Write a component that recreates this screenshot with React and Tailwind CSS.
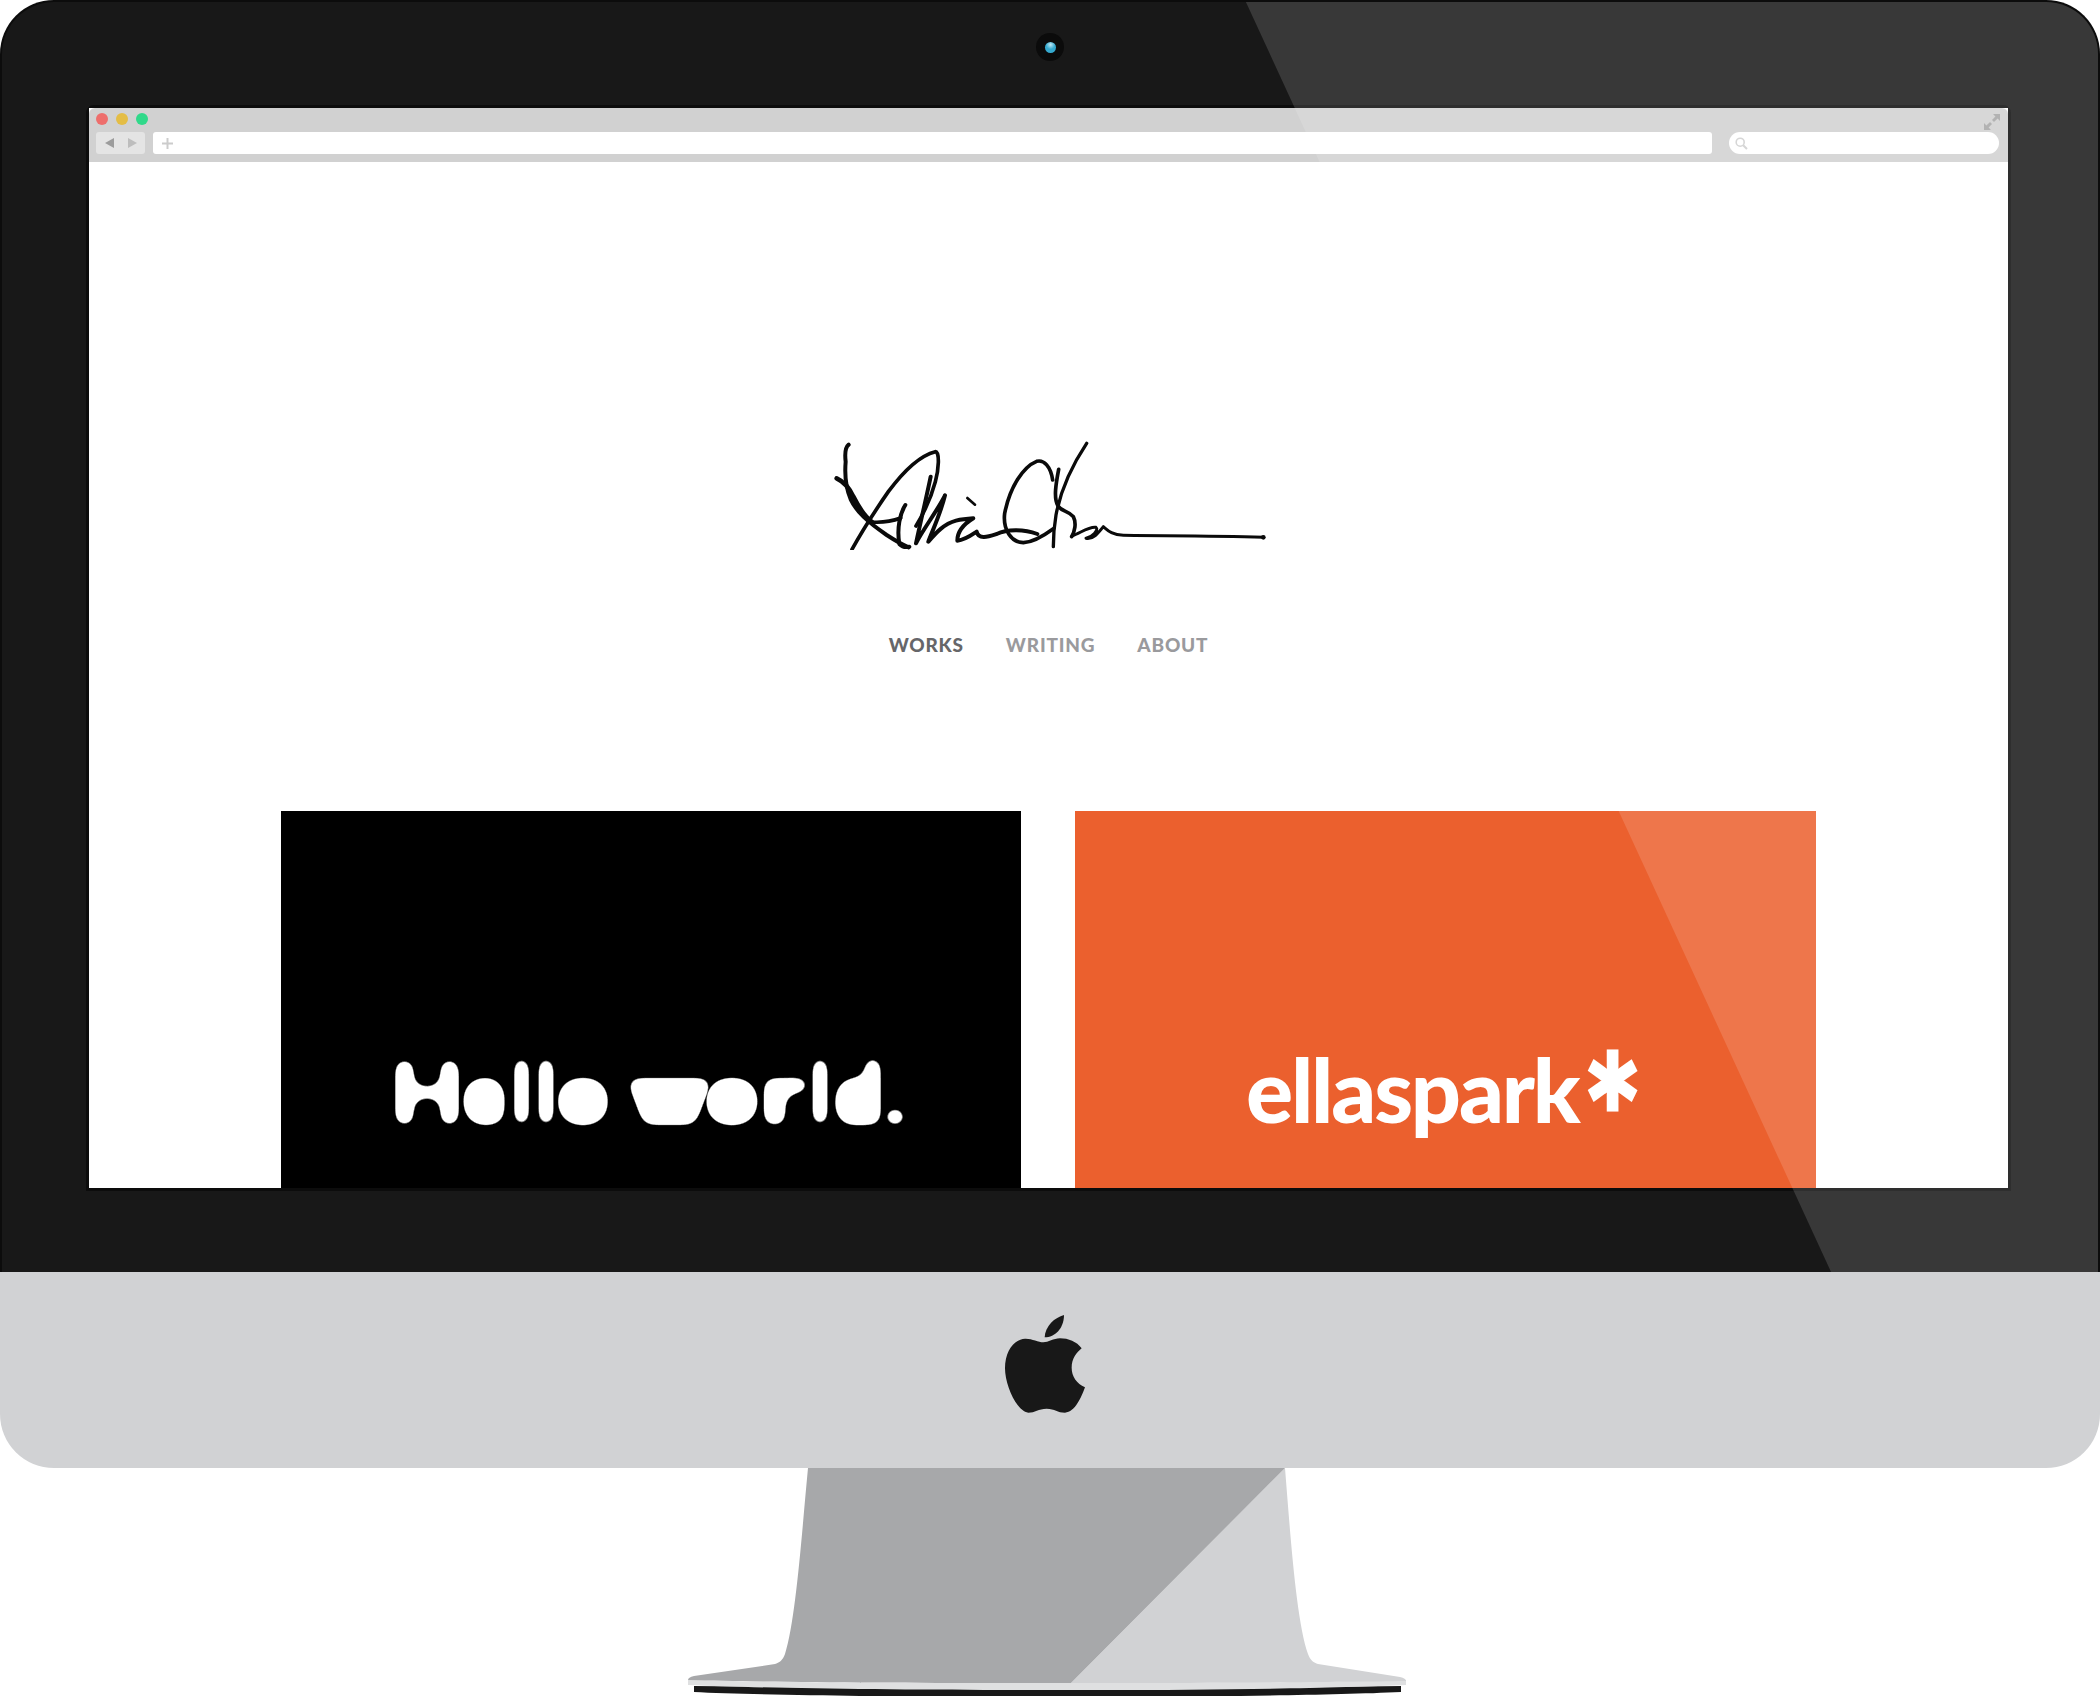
const helloLetters = [
  ["H", 64, 1.14], ["e", 50, 0.94], ["l", 25, 0.94], ["l", 24, 0.94], ["o", 50, 1.07], [" ", 24, 1], ["w", 75, 1.19], ["o", 50, 1.1], ["r", 51, 1.5], ["l", 24, 0.94], ["d", 54, 1.03], [".", 18, 1.23],
];

function Signature() {
  return (
    <svg width="480" height="130" viewBox="0 0 1440 390" fill="none" stroke="#0a0a0a" strokeLinecap="round" strokeLinejoin="round" className="block ml-[3px]">
      <g strokeWidth="11">
        <path d="M116 74 C106 82 104 100 107 125 C104 160 106 200 122 238 C140 276 172 305 230 345 C250 358 272 372 296 382" strokeWidth="12" />
        <path d="M80 175 C100 184 116 200 130 230 C144 258 162 288 186 306" strokeWidth="14" />
        <path d="M126 388 C150 345 190 280 235 215 C272 165 325 108 376 95 C390 96 386 150 376 185 C360 245 335 290 318 318" strokeWidth="11" />
        <path d="M184 306 C210 308 245 304 272 294" />
        <path d="M286 255 C270 280 260 325 268 372 C278 382 290 382 298 380" strokeWidth="12" />
        <path d="M362 170 C352 220 335 290 318 370 C338 330 380 275 405 226 C392 280 368 330 355 365 C375 342 400 312 438 302 C455 298 475 296 490 295 C462 312 442 335 442 362 C465 360 485 345 500 335 C505 360 535 350 560 342 C590 328 640 326 682 342" strokeWidth="12" />
        <path d="M472 234 L495 254" strokeWidth="8" />
      </g>
      <g strokeWidth="11">
        <path d="M728 180 C722 140 702 118 680 124 C640 140 600 200 584 280 C578 330 605 368 640 368 C670 366 700 348 730 326" />
        <path d="M830 70 C790 130 752 210 738 285 C732 320 730 350 730 380" strokeWidth="10" />
        <path d="M746 148 C738 190 730 235 744 258 C756 276 776 272 790 290 C800 310 794 335 785 350" strokeWidth="11" />
        <path d="M786 348 C810 340 838 318 858 322 C868 330 845 352 828 355 C850 360 868 335 880 320 C892 330 905 345 940 346 C1040 348 1200 346 1360 352" strokeWidth="9" />
      </g>
      <circle cx="1360" cy="352" r="7" fill="#0a0a0a" stroke="none" />
    </svg>
  );
}

function AppleLogo() {
  return (
    <svg width="120" height="130" viewBox="0 0 360 390" fill="#181818" className="block">
      <path d="M305 145 C290 125 265 115 240 115 C220 115 205 127 190 127 C175 127 155 115 135 116 C105 117 75 150 75 205 C75 255 110 335 145 338 C165 338 175 326 200 326 C225 326 232 338 255 338 C285 337 305 290 315 262 C290 250 275 230 275 203 C275 175 290 158 305 145 Z" />
      <path d="M252 45 C225 52 195 78 194 112 C225 112 252 85 252 45 Z" />
    </svg>
  );
}

function Stand() {
  return (
    <svg width="2100" height="228" viewBox="0 1468 2100 228" className="block">
      <path d="M694 1686 L860 1688 L1240 1688 L1401 1686 L1401 1692 C1360 1694 1300 1695 1240 1696 L860 1696 C800 1695 730 1694 694 1692 Z" fill="#181818" />
      <path d="M688 1680 C760 1682 880 1683 1000 1683 L1100 1683 C1220 1683 1340 1682 1406 1680 L1406 1685 C1340 1688 1220 1690 1100 1690 L1000 1690 C880 1690 760 1688 688 1685 Z" fill="#dfe0e1" />
      <path d="M1285 1468 C1290 1530 1296 1620 1308 1654 C1310 1660 1314 1663 1318 1664 L1400 1677 C1404 1678 1406 1679 1406 1681 C1340 1682 1220 1683 1100 1683 L1071 1683 Z" fill="#d1d2d4" />
      <path d="M808 1468 C802 1530 796 1620 785 1654 C783 1660 779 1663 775 1664 L694 1676 C690 1677 688 1678 688 1680 C760 1682 880 1683 1000 1683 L1071 1683 L1285 1468 Z" fill="#a7a8aa" />
    </svg>
  );
}

function BrowserBar() {
  return (
    <div className="h-[54px] shrink-0 bg-[#d1d1d1] rounded-t-[6px] flex flex-col px-[7px]">
      <div className="flex items-center gap-[8px] h-[22px] mb-[2px]">
        <span className="w-[12px] h-[12px] rounded-full bg-[#ee6e6c]" />
        <span className="w-[12px] h-[12px] rounded-full bg-[#e4bd45]" />
        <span className="w-[12px] h-[12px] rounded-full bg-[#30d98a]" />
        <svg width="16" height="16" viewBox="0 0 16 16" fill="#a6a6a6" className="ml-auto mr-[1px] mt-[6px]">
          <path d="M16 0 L16 7 L13.6 4.6 L10 8 L8 6 L11.4 2.4 L9 0 Z" />
          <path d="M0 16 L0 9 L2.4 11.4 L6 8 L8 10 L4.6 13.6 L7 16 Z" />
        </svg>
      </div>
      <div className="flex items-center h-[22px]">
        <div className="w-[49px] h-[22px] rounded-[3px] bg-[#e4e4e4] flex items-center justify-center gap-[14px]">
          <svg width="9" height="10" viewBox="0 0 9 10" fill="#9c9c9c"><path d="M9 0 V10 L0 5 Z" /></svg>
          <svg width="9" height="10" viewBox="0 0 9 10" fill="#bdbdbd"><path d="M0 0 V10 L9 5 Z" /></svg>
        </div>
        <div className="ml-[8px] w-[1559px] h-[22px] rounded-[3px] bg-white flex items-center pl-[9px]">
          <svg width="11" height="11" viewBox="0 0 11 11" fill="#cccccc"><path d="M4.5 0 H6.5 V4.5 H11 V6.5 H6.5 V11 H4.5 V6.5 H0 V4.5 H4.5 Z" /></svg>
        </div>
        <div className="ml-[17px] w-[270px] h-[22px] rounded-full bg-white flex items-center pl-[6px]">
          <svg width="13" height="13" viewBox="0 0 13 13" fill="none" stroke="#cfcfcf" strokeWidth="1.6"><circle cx="5.2" cy="5.2" r="4" /><path d="M8.2 8.2 L12 12" strokeWidth="2" /></svg>
        </div>
      </div>
    </div>
  );
}

function Cards() {
  return (
    <div className="grid grid-cols-[740px_741px] gap-[54px] w-[1535px]">
      <div className="h-[378px] bg-black overflow-hidden">
        <div className="pt-[230px] pl-[114px] flex text-white font-['Lato',sans-serif] font-black text-[84px] leading-[100px]">
          {helloLetters.map(([ch, w, sx], i) => (
            <span key={i} className="block shrink-0 whitespace-pre [filter:url(#blob)]" style={{ width: w }}>
              <span className="flex justify-center" style={{ transform: `scaleX(${sx})` }}>{ch}</span>
            </span>
          ))}
        </div>
      </div>
      <div className="h-[378px] bg-[#eb602e] overflow-hidden">
        <div className="pt-[228px] pl-[171px] flex items-start text-white font-['Lato',sans-serif] font-black text-[88px] leading-[100px] tracking-[-2.2px]">
          <span>ellaspark</span>
          <span className="mt-[25px] ml-[4px] text-[170px] leading-[100px] tracking-normal font-black origin-left scale-x-[0.82] [-webkit-text-stroke:3px_white]">*</span>
        </div>
      </div>
    </div>
  );
}

export default function App() {
  return (
    <div className="w-[2100px] h-[1696px] bg-white font-['Lato',sans-serif]">
      <svg className="absolute w-0 h-0" aria-hidden="true">
        <filter id="blob" x="-50%" y="-40%" width="200%" height="180%" colorInterpolationFilters="sRGB">
          <feMorphology operator="dilate" radius="13" />
          <feMorphology operator="erode" radius="11" />
          <feGaussianBlur stdDeviation="7" />
          <feComponentTransfer>
            <feFuncA type="linear" slope="14" intercept="-6.5" />
          </feComponentTransfer>
        </filter>
      </svg>

      <div className="relative h-[1272px] bg-[#181818] rounded-t-[54px] border-2 border-b-0 border-[#0c0c0c] overflow-hidden">
        <div className="flex justify-center pt-[31px] h-[103px]">
          <div className="w-[28px] h-[28px] rounded-full bg-[#0b0b0b] flex items-center justify-center">
            <div className="w-[11px] h-[11px] rounded-full bg-[radial-gradient(circle_at_50%_25%,#bfe9f5_0,#35a9cf_45%)]" />
          </div>
        </div>
        <div className="mx-[84px] w-[1925px] border-[3px] border-[#0c0c0c] rounded-t-[8px]">
          <div className="h-[1080px] flex flex-col bg-white overflow-hidden">
            <BrowserBar />
            <div className="flex-1 flex flex-col items-center">
              <div className="pt-[258px]"><Signature /></div>
              <nav className="mt-[83px] h-[24px] flex items-center gap-[42px] text-[19px] font-black tracking-[0.8px] leading-[24px]">
                <span className="text-[#666669]">WORKS</span>
                <span className="text-[#9a9a9d]">WRITING</span>
                <span className="text-[#9a9a9d]">ABOUT</span>
              </nav>
              <div className="mt-[154px]"><Cards /></div>
            </div>
          </div>
        </div>
        <div className="absolute inset-0 bg-white/[0.14] pointer-events-none [clip-path:polygon(1243px_-2px,2100px_-2px,2100px_1272px,1830px_1272px)]" />
      </div>

      <div className="h-[196px] bg-[#d1d2d4] rounded-b-[54px] flex justify-center pt-[28px]">
        <div className="ml-[-20px]"><AppleLogo /></div>
      </div>

      <Stand />
    </div>
  );
}
